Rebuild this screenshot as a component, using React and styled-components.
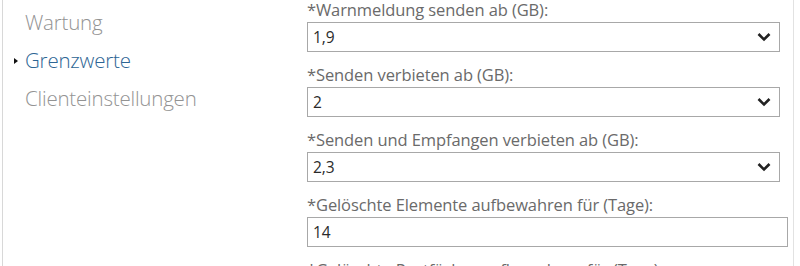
import React from 'react'
import styled, { createGlobalStyle } from 'styled-components'

const GlobalStyle = createGlobalStyle`
  html, body {
    margin: 0;
    padding: 0;
    background: #fff;
  }
  body {
    font-family: "Open Sans", "Noto Sans", "Liberation Sans", sans-serif;
  }
`

const Page = styled.div`
  width: 800px;
  height: 266px;
  overflow: hidden;
  box-sizing: border-box;
  display: flex;
  background: #fff;
`

const Frame = styled.div`
  flex: 1;
  display: flex;
  margin-left: 2px;
  margin-right: 6px;
  border-left: 1px solid #d8d8d8;
  border-right: 1px solid #e2e2e2;
`

const Nav = styled.ul`
  list-style: none;
  margin: 0;
  padding: 9px 0 0 22px;
  width: 280px;
  display: flex;
  flex-direction: column;
  gap: 11px;
`

const NavItem = styled.li`
  position: relative;
  font-size: 20.5px;
  line-height: 27px;
  font-weight: 300;
  letter-spacing: -0.2px;
  color: ${p => (p.$active ? '#2d6594' : '#939393')};

  &::before {
    content: '';
    display: ${p => (p.$active ? 'block' : 'none')};
    position: absolute;
    left: -11px;
    top: 11px;
    border-left: 4px solid #111;
    border-top: 3px solid transparent;
    border-bottom: 3px solid transparent;
  }
`

const Form = styled.div`
  display: flex;
  flex-direction: column;
  margin-left: 2px;
  width: 481px;
`

const Field = styled.div`
  display: flex;
  flex-direction: column;
  margin-bottom: 13px;
`

const Label = styled.div`
  font-size: 16.5px;
  line-height: 17px;
  padding-top: 1px;
  color: #6a6a6a;
  padding-bottom: 4px;
  white-space: nowrap;
  letter-spacing: -0.1px;
`

const Box = styled.div`
  box-sizing: border-box;
  height: 30px;
  width: ${p => (p.$wide ? '481px' : '473px')};
  border: 1px solid #a8a8a8;
  display: flex;
  align-items: center;
  justify-content: space-between;
  padding: 0 8px 0 5px;
  font-size: 15.5px;
  color: #2a2a2a;
  background: #fff;
`

const Chevron = () => (
  <svg width="14" height="10" viewBox="0 0 14 10">
    <path d="M1.5 2 L7 7.5 L12.5 2" fill="none" stroke="#222" strokeWidth="2.6" />
  </svg>
)

const fields = [
  { label: '*Warnmeldung senden ab (GB):', value: '1,9', select: true },
  { label: '*Senden verbieten ab (GB):', value: '2', select: true },
  { label: '*Senden und Empfangen verbieten ab (GB):', value: '2,3', select: true },
  { label: '*Gelöschte Elemente aufbewahren für (Tage):', value: '14' },
  { label: '*Gelöschte Postfächer aufbewahren für (Tage):' },
]

export default function App() {
  return (
    <Page>
      <GlobalStyle />
      <Frame>
        <Nav>
          <NavItem>Wartung</NavItem>
          <NavItem $active>Grenzwerte</NavItem>
          <NavItem>Clienteinstellungen</NavItem>
        </Nav>
        <Form>
          {fields.map(f => (
            <Field key={f.label}>
              <Label>{f.label}</Label>
              {f.value && (
                <Box $wide={!f.select}>
                  <span>{f.value}</span>
                  {f.select && <Chevron />}
                </Box>
              )}
            </Field>
          ))}
        </Form>
      </Frame>
    </Page>
  )
}
